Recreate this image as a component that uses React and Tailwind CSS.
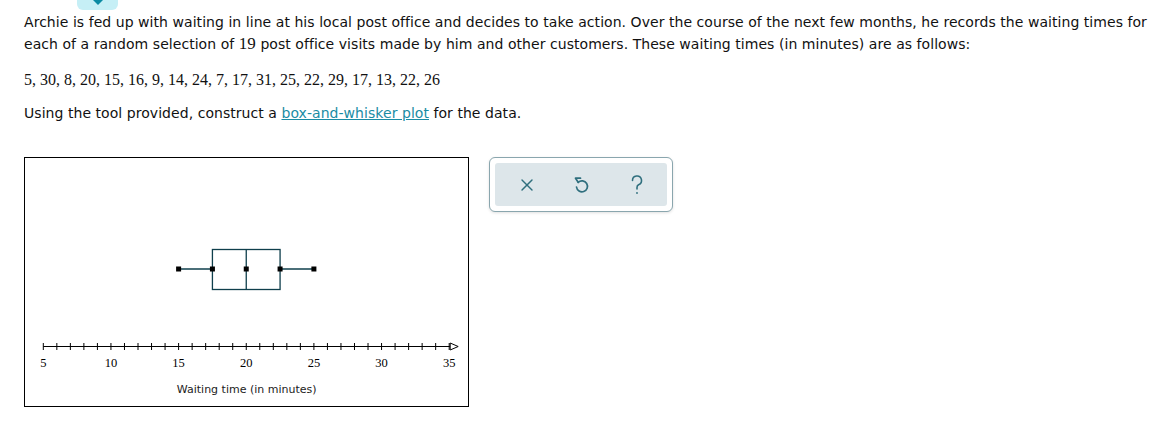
import { X } from "lucide-react";

const data = [5, 30, 8, 20, 15, 16, 9, 14, 24, 7, 17, 31, 25, 22, 29, 17, 13, 22, 26];

// axis maps 5..35 onto svg x
const x0 = 18.3;
const unit = 13.53;
const px = (v) => x0 + (v - 5) * unit;

function Plot() {
  const ticks = [];
  for (let v = 5; v <= 35; v++) ticks.push(v);
  const labels = [5, 10, 15, 20, 25, 30, 35];
  const boxColor = "#0f3f4c";

  return (
    <div className="w-[445px] h-[250px] border border-black bg-white shrink-0">
      <svg width="443" height="248" viewBox="0 0 443 248">
        {/* whiskers */}
        <line x1={px(15)} y1="111" x2={px(17.5)} y2="111" stroke={boxColor} strokeWidth="1.3" />
        <line x1={px(22.5)} y1="111" x2={px(25)} y2="111" stroke={boxColor} strokeWidth="1.3" />
        {/* box */}
        <rect x={px(17.5)} y="91.5" width={px(22.5) - px(17.5)} height="40" fill="none" stroke={boxColor} strokeWidth="1.3" />
        <line x1={px(20)} y1="91.5" x2={px(20)} y2="131.5" stroke={boxColor} strokeWidth="1.3" />
        {[15, 17.5, 20, 22.5, 25].map((v) => (
          <rect key={v} x={px(v) - 2.5} y="108.5" width="5" height="5" fill="#000" />
        ))}

        {/* axis */}
        <line x1={px(5)} y1="188.5" x2={px(35) + 1} y2="188.5" stroke="#000" strokeWidth="1" />
        {ticks.map((v) => (
          <line key={v} x1={px(v)} y1="185" x2={px(v)} y2="192" stroke="#000" strokeWidth="1" />
        ))}
        <path d={`M${px(35) + 1} 185 L${px(35) + 9} 188.5 L${px(35) + 1} 192 Z`} fill="#fff" stroke="#000" strokeWidth="1" />
        {labels.map((v) => (
          <text
            key={v}
            x={px(v)}
            y="209"
            textAnchor="middle"
            fontFamily="'Liberation Serif', serif"
            fontSize="12.5"
            fill="#000"
          >
            {v}
          </text>
        ))}
        <text
          x="221.7"
          y="235"
          textAnchor="middle"
          fontFamily="'DejaVu Sans', Verdana, sans-serif"
          fontSize="11"
          fill="#222"
        >
          Waiting time (in minutes)
        </text>
      </svg>
    </div>
  );
}

function UndoIcon() {
  return (
    <svg width="22" height="22" viewBox="0 0 22 22" fill="none" stroke="#2f6f7e" strokeWidth="1.7" strokeLinecap="round" strokeLinejoin="round">
      <path d="M9.5 4.2 H4.5 L7.2 8.3" />
      <path d="M7.2 8.3 A5.5 5.5 0 1 1 5.5 13" />
    </svg>
  );
}

function HelpIcon() {
  return (
    <svg width="22" height="24" viewBox="0 0 22 24" fill="none" stroke="#2f6f7e" strokeWidth="1.6" strokeLinecap="round">
      <path d="M6.5 7.5 A4.5 4.5 0 1 1 12.6 11.7 C11.4 12.3 11 13 11 14.4 V16" />
      <circle cx="11" cy="20" r="0.9" fill="#2f6f7e" stroke="none" />
    </svg>
  );
}

function Toolbar() {
  return (
    <div className="w-[184px] h-[55px] rounded-[6px] border border-[#8aa6ae] bg-white p-[5px] shadow-[0_1px_3px_rgba(0,0,0,0.12)] shrink-0">
      <div className="h-full rounded-[3px] bg-[#dde6ea] flex items-center justify-between pl-[21px] pr-[19px]">
        <button className="w-[22px] h-[22px] flex items-center justify-center text-[#2f6f7e]">
          <X size={20} strokeWidth={1.7} />
        </button>
        <button className="w-[22px] h-[22px] flex items-center justify-center">
          <UndoIcon />
        </button>
        <button className="w-[22px] h-[24px] flex items-center justify-center">
          <HelpIcon />
        </button>
      </div>
    </div>
  );
}

export default function App() {
  return (
    <div className="w-[1171px] h-[436px] bg-white overflow-hidden font-['DejaVu_Sans',Verdana,sans-serif] text-[14px] text-[#111]">

      {/* collapsed tab at top */}
      <div className="ml-[77px] w-[41px] h-[10px] bg-[#c6eff6] rounded-b-[6px] flex justify-center">
        <div className="w-0 h-0 border-l-[5px] border-r-[5px] border-t-[5px] border-l-transparent border-r-transparent border-t-[#0b8ba3]" />
      </div>

      <div className="pl-[24px]">
        <p className="leading-[21px] mt-[2px] whitespace-nowrap tracking-[0.05px]">
          Archie is fed up with waiting in line at his local post office and decides to take action. Over the course of the next few months, he records the waiting times for
          <br />
          each of a random selection of{" "}
          <span className="font-['Liberation_Serif',serif] text-[17px]">19</span>{" "}
          post office visits made by him and other customers. These waiting times (in minutes) are as follows:
        </p>

        <p className="mt-[14px] font-['Liberation_Serif',serif] text-[16px] leading-[21px]">
          {data.join(", ")}
        </p>

        <p className="mt-[13px] leading-[21px] tracking-[0.05px]">
          Using the tool provided, construct a{" "}
          <a href="#" className="text-[#1a8ca4] underline">box-and-whisker plot</a>{" "}
          for the data.
        </p>

        <div className="mt-[33px] flex gap-[20px] items-start">
          <Plot />
          <Toolbar />
        </div>
      </div>
    </div>
  );
}
